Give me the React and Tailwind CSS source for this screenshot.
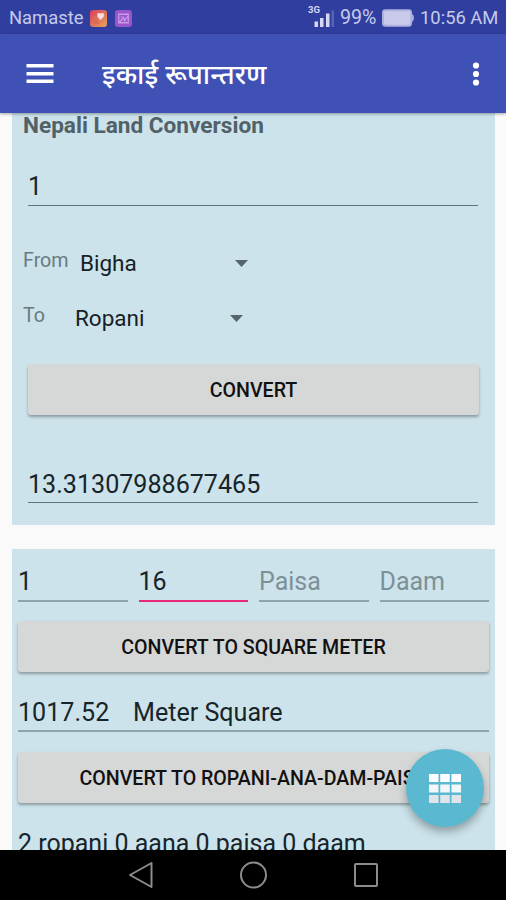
function StatusBar() {
  return (
    <div className="flex h-[34px] shrink-0 items-center bg-[#303f9f] pl-[9px] pr-[9px] pt-[2px] text-[#c5caec]">
      <span className="w-[75px] text-[18.4px] leading-none">Namaste</span>
      <svg className="ml-[6px]" width="17" height="17" viewBox="0 0 16 16">
        <defs>
          <linearGradient id="gallery" x1="0" y1="0" x2="1" y2="1">
            <stop offset="0" stopColor="#d6405c" />
            <stop offset="1" stopColor="#e8a45a" />
          </linearGradient>
        </defs>
        <rect width="16" height="16" rx="3" fill="url(#gallery)" />
        <path d="M7 3h6v3l-3 3.500-3-3z" fill="#f6dfe2" />
        <path d="M3 13l3-3.500 3 3.500z" fill="#d86a50" />
      </svg>
      <svg className="ml-[8px]" width="17" height="17" viewBox="0 0 16 16">
        <rect width="16" height="16" rx="3" fill="#9a55cc" />
        <path d="M3.500 4h9v8h-9zM4 12l4-5 1 3 3-4M5.500 6.500h1" fill="none" stroke="#c79ae4" strokeWidth="1.200" />
      </svg>
      <div className="flex-1" />
      <svg className="mb-[6px]" width="28" height="24" viewBox="0 0 28 24">
        <text x="2" y="10" fontSize="9.500" fontWeight="700" fill="#d4d8f2" fontFamily="Roboto, sans-serif">3G</text>
        <path d="M8.500 18.500H12v5.500H8.500zM14 15h3.500v9H14zM20 10.500h3.500V24H20z" fill="#d4d8f2" />
        <path d="M25.500 7.500H28V24h-2.500z" fill="#5664b4" />
      </svg>
      <span className="ml-[6px] w-[37px] whitespace-nowrap text-[19.6px] leading-[22px]">99%</span>
      <svg className="ml-[5px]" width="32" height="18" viewBox="0 0 33 18">
        <rect x="1" y="1" width="29" height="16" rx="2.500" fill="#c9caeb" stroke="#aeb2de" strokeWidth="2" />
        <path d="M31 5q2 1 2 4t-2 4z" fill="#aeb2de" />
      </svg>
      <span className="ml-[6px] w-[77px] whitespace-nowrap text-[18.4px] leading-none">10:56 AM</span>
    </div>
  );
}

function AppBar() {
  return (
    <div className="relative z-10 flex h-[79px] shrink-0 items-center bg-[#3f51b5] pl-[24px] pr-[23px] text-white shadow-[0_1px_3px_rgba(0,0,0,0.35)]">
      <svg width="32" height="24" viewBox="0 0 32 24">
        <path d="M2.500 2h27v3.500h-27zM2.500 10h27v3.500h-27zM2.500 17.500h27V21h-27z" fill="#fff" />
      </svg>
      <h1 className="ml-[46px] flex-1 whitespace-nowrap pt-[9px] font-['Noto_Sans_Devanagari','Noto_Sans',sans-serif] text-[27.3px] font-medium leading-none">
        इकाई रूपान्तरण
      </h1>
      <svg width="14" height="24" viewBox="0 0 14 24">
        <circle cx="7" cy="3.500" r="3.100" fill="#fff" />
        <circle cx="7" cy="12" r="3.100" fill="#fff" />
        <circle cx="7" cy="20.500" r="3.100" fill="#fff" />
      </svg>
    </div>
  );
}

function Button({ children }) {
  return (
    <button className="block h-[51px] w-full whitespace-nowrap rounded-[3px] bg-[#d6d7d7] pt-px text-[19.6px] font-medium leading-[51px] text-[#111] shadow-[0_2px_3px_rgba(0,0,0,0.32)]">
      {children}
    </button>
  );
}

function Spinner({ value }) {
  return (
    <div className="flex w-[168px] items-center justify-between">
      <span className="text-[22.5px] leading-[26px] text-[#172024]">{value}</span>
      <svg width="13" height="7" viewBox="0 0 13 7">
        <path d="M0 0h13L6.500 7z" fill="#56656b" />
      </svg>
    </div>
  );
}

function Field({ value, hint, active }) {
  return (
    <div className={active ? 'h-[37px] border-b-2 border-[#e8287c]' : 'h-[37px] border-b-2 border-[#8ba4ad]'}>
      <span className={value ? 'text-[25px] leading-[34px] text-[#172429]' : 'text-[25px] leading-[34px] text-[#7d9097]'}>
        {value || hint}
      </span>
    </div>
  );
}

function LandCard() {
  return (
    <section className="h-[412px] shrink-0 bg-[#cce3eb]">
      <h2 className="ml-[11px] text-[22.6px] font-bold leading-[26px] text-[#526067]">
        Nepali Land Conversion
      </h2>
      <div className="ml-[16px] mr-[17px] mt-[31px] h-[36px] border-b border-[#60747c] text-[25px] leading-[34px] text-[#172429]">
        1
      </div>
      <div className="ml-[11px] mt-[44px] flex">
        <span className="w-[57px] text-[19.7px] leading-[22px] text-[#69797f]">From</span>
        <Spinner value="Bigha" />
      </div>
      <div className="ml-[11px] mt-[29px] flex">
        <span className="w-[52px] text-[19.7px] leading-[22px] text-[#69797f]">To</span>
        <Spinner value="Ropani" />
      </div>
      <div className="ml-[16px] mr-[16px] mt-[33px]">
        <Button>CONVERT</Button>
      </div>
      <div className="ml-[16px] mr-[17px] mt-[53px] h-[35px] border-b border-[#60747c] text-[25.1px] leading-[34px] text-[#172429]">
        13.31307988677465
      </div>
    </section>
  );
}

function AreaCard() {
  return (
    <section className="mt-[24px] h-[320px] shrink-0 bg-[#cce3eb] px-[6px] pt-[16px]">
      <div className="grid h-[37px] grid-cols-4 gap-[11px]">
        <Field value="1" />
        <Field value="16" active />
        <Field hint="Paisa" />
        <Field hint="Daam" />
      </div>
      <div className="mt-[19px]">
        <Button>CONVERT TO SQUARE METER</Button>
      </div>
      <div className="mt-[24px] flex h-[36px] border-b-2 border-[#8ba4ad] text-[25.1px] leading-[34px] text-[#172429]">
        <span className="w-[115px]">1017.52</span>
        <span>Meter Square</span>
      </div>
      <div className="mt-[20px]">
        <Button>CONVERT TO ROPANI-ANA-DAM-PAISA</Button>
      </div>
      <div className="mt-[24px] whitespace-nowrap text-[25px] leading-[34px] text-[#172429]">
        2 ropani 0 aana 0 paisa 0 daam
      </div>
    </section>
  );
}

const ROWS = [
  { y: 0, fill: '#ffffff' },
  { y: 10.5, fill: '#f4f7f8' },
  { y: 21, fill: '#dfe5ea' },
];

function GridFab() {
  return (
    <button className="absolute bottom-[23px] right-[22px] flex h-[78px] w-[78px] items-center justify-center rounded-full bg-[#5ab9d1] shadow-[0_5px_9px_rgba(0,0,0,0.3)]">
      <svg width="32" height="29" viewBox="0 0 32 29">
        {ROWS.map((row) =>
          [0, 11.25, 22.5].map((x) => (
            <rect key={`${x}-${row.y}`} x={x} y={row.y} width="9.500" height="8" fill={row.fill} />
          ))
        )}
      </svg>
    </button>
  );
}

function NavBar() {
  return (
    <div className="flex h-[50px] shrink-0 items-center justify-center gap-[86px] bg-black">
      <svg width="26" height="28" viewBox="0 0 26 28" fill="none" stroke="#8c8c8c" strokeWidth="2">
        <path d="M3 14L24.500 2v24z" strokeLinejoin="round" />
      </svg>
      <svg width="28" height="28" viewBox="0 0 28 28" fill="none" stroke="#8c8c8c" strokeWidth="2">
        <circle cx="14.500" cy="14" r="12.500" />
      </svg>
      <svg width="26" height="28" viewBox="0 0 26 28" fill="none" stroke="#8c8c8c" strokeWidth="2">
        <rect x="2" y="3" width="22" height="22" rx="1" />
      </svg>
    </div>
  );
}

export default function App() {
  return (
    <div className="flex h-[900px] w-[506px] flex-col overflow-hidden bg-[#fafafa] font-[Roboto,sans-serif]">
      <StatusBar />
      <AppBar />
      <main className="relative flex min-h-0 flex-1 flex-col overflow-hidden pl-[12px] pr-[11px]">
        <LandCard />
        <AreaCard />
        <GridFab />
      </main>
      <NavBar />
    </div>
  );
}
